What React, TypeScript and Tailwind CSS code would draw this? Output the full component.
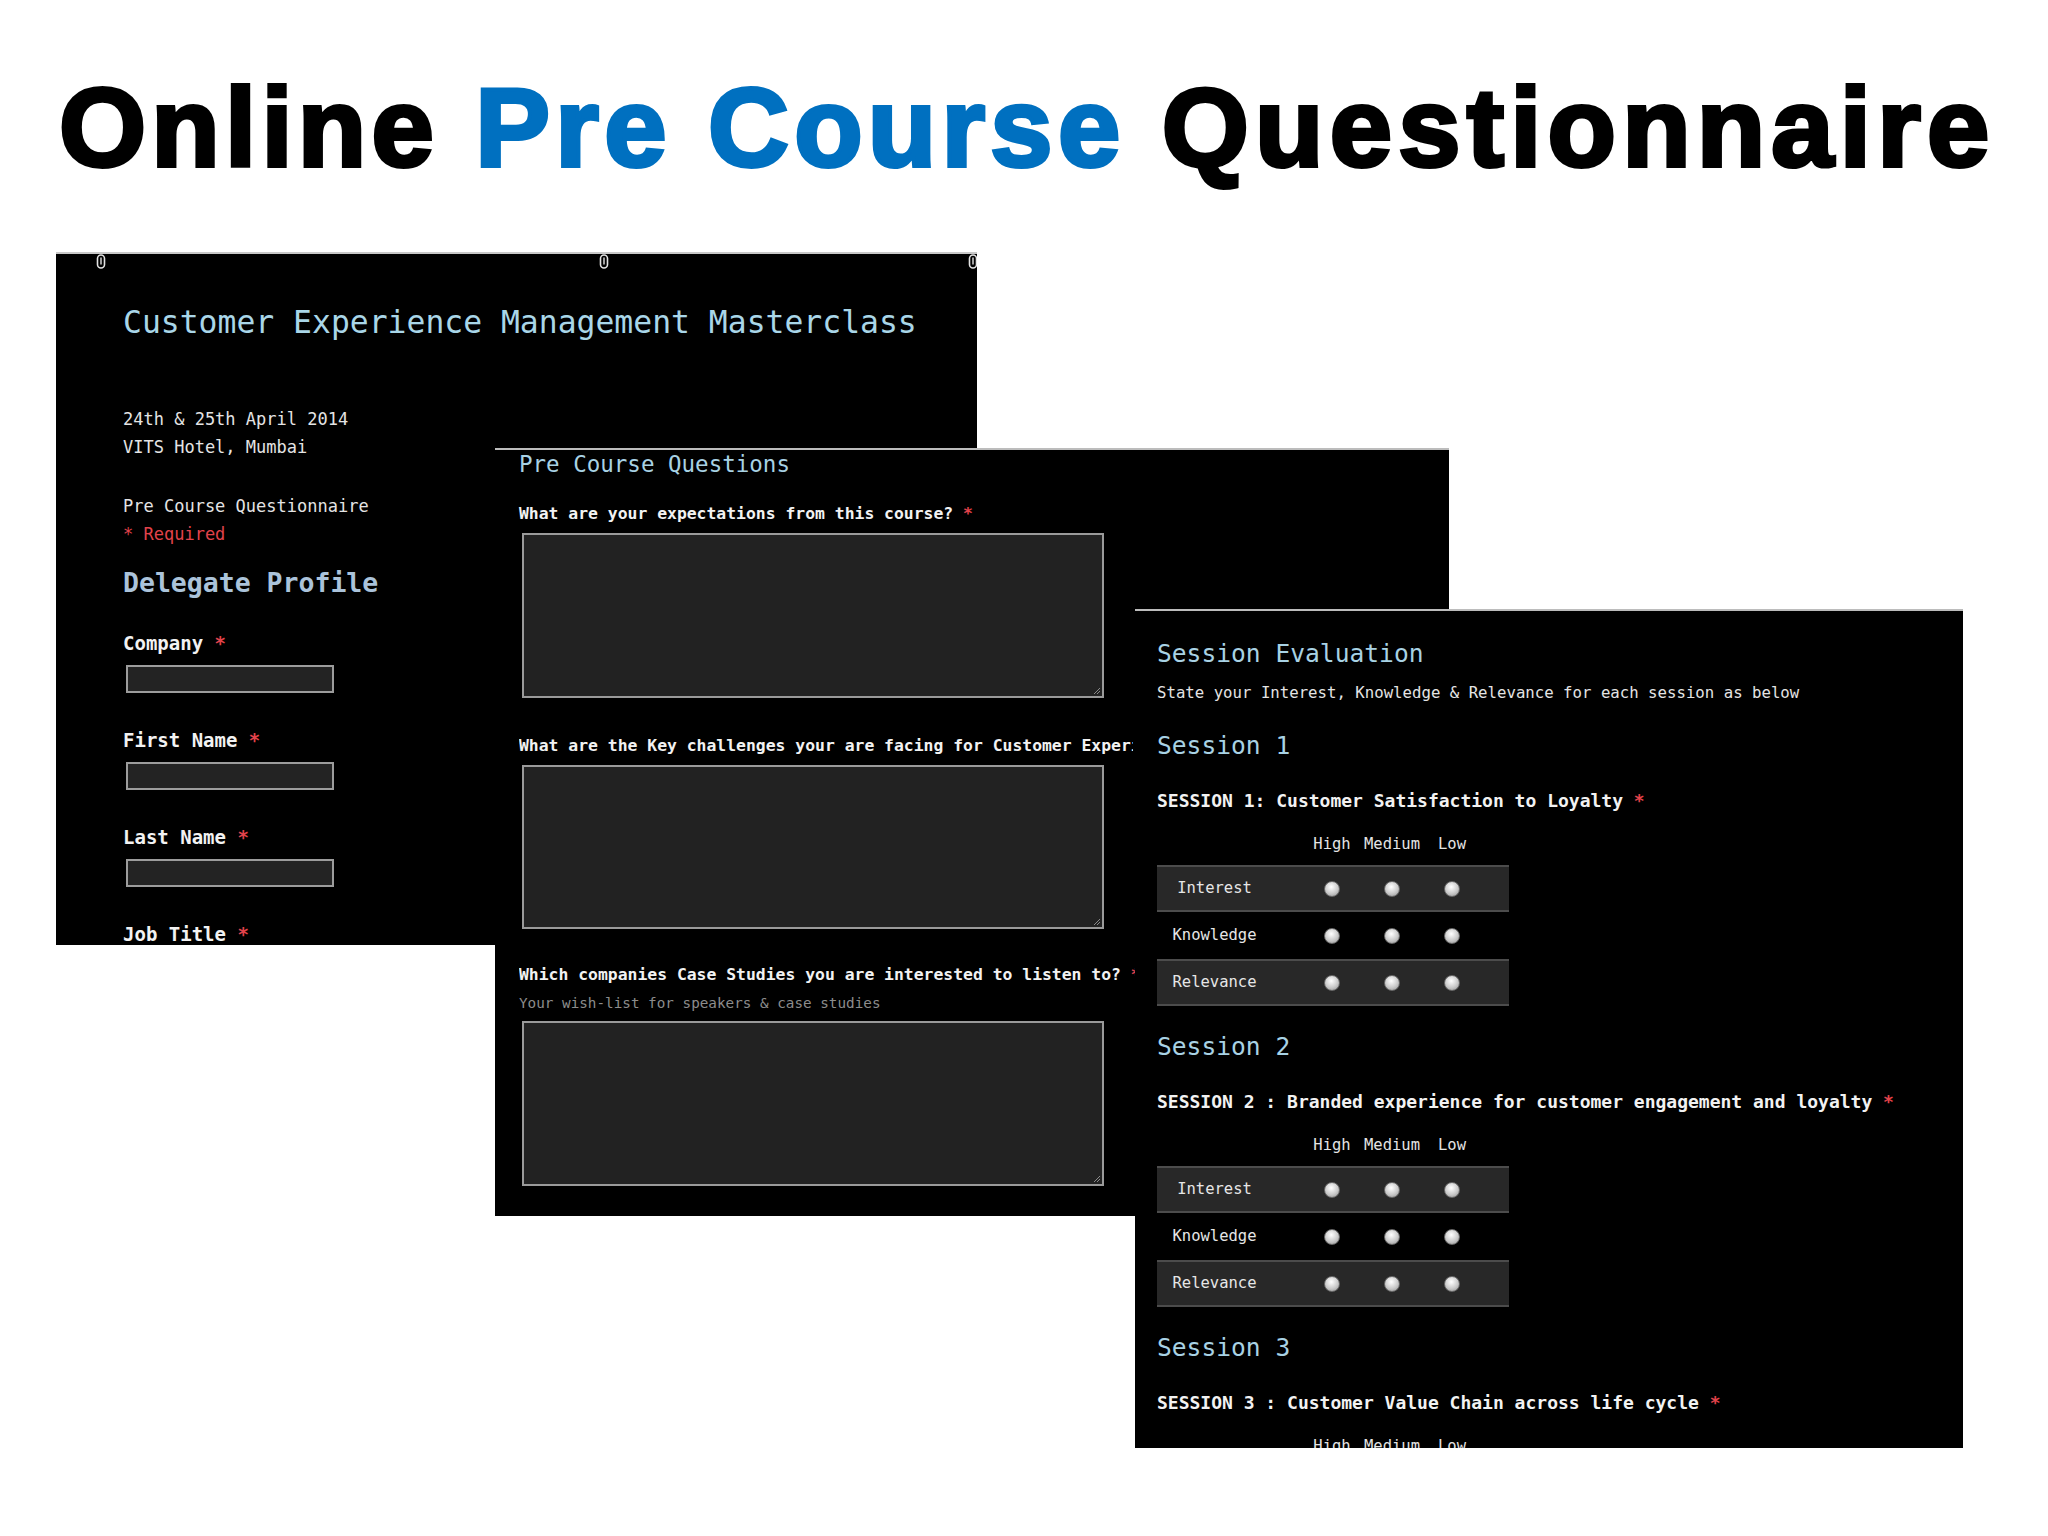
import React from 'react';

const sessions = [
  { n: 1, title: 'SESSION 1: Customer Satisfaction to Loyalty' },
  { n: 2, title: 'SESSION 2 : Branded experience for customer engagement and loyalty' },
  { n: 3, title: 'SESSION 3 : Customer Value Chain across life cycle' },
];

const rows = ['Interest', 'Knowledge', 'Relevance'];

function Req() {
  return <span className="text-[#e2434b]">*</span>;
}

function Clip() {
  return (
    <svg width="10" height="16" viewBox="0 0 10 16">
      <rect x="1.5" y="1" width="7" height="13" rx="3.5" fill="none" stroke="#e2e2e2" strokeWidth="1.6" />
      <path d="M5 3.5v7" stroke="#e2e2e2" strokeWidth="1.4" />
    </svg>
  );
}

function TextBox({ h }: { h: string }) {
  return (
    <div className={`relative mt-[8px] ml-[3px] w-[582px] ${h} bg-[#222222] border-2 border-[#9a9a9a]`}>
      <svg className="absolute right-[1px] bottom-[1px]" width="9" height="9" viewBox="0 0 9 9">
        <path d="M8 2L2 8M8 5L5 8" stroke="#8a8a8a" strokeWidth="1" />
      </svg>
    </div>
  );
}

function Field({ label, first }: { label: string; first?: boolean }) {
  return (
    <div className={first ? 'mt-[31px]' : 'mt-[35px]'}>
      <div className="w-fit text-[19px] leading-[24px] font-bold text-[#f2f2f2] whitespace-nowrap">
        {label} <Req />
      </div>
      <div className="mt-[10px] ml-[3px] w-[208px] h-[28px] bg-[#232323] border-2 border-[#9c9c9c]" />
    </div>
  );
}

function Radio() {
  return (
    <span className="block w-[16px] h-[16px] rounded-full border border-[#6a6a6a] bg-[radial-gradient(circle_at_45%_35%,#ffffff,#cacaca_55%,#8f8f8f)]" />
  );
}

function Grid() {
  return (
    <div className="mt-[11px] w-[352px]">
      {rows.map((r, i) => (
        <div
          key={r}
          className={
            i % 2 === 0
              ? 'flex items-center h-[47px] bg-[#282828] border-y-2 border-[#4c4c4c]'
              : 'flex items-center h-[47px] bg-black'
          }
        >
          <div className="w-[115px] text-center text-[15.5px] text-[#e6e6e6]">{r}</div>
          <div className="w-[30px]" />
          {[0, 1, 2].map(c => (
            <div key={c} className="w-[60px] flex justify-center">
              <Radio />
            </div>
          ))}
        </div>
      ))}
    </div>
  );
}

export default function App() {
  return (
    <div className="relative w-[2048px] h-[1536px] bg-white overflow-hidden">
      <h1 className="pt-[72px] pl-[59px] text-[112px] leading-[112px] font-bold tracking-[5.25px] whitespace-nowrap font-['Liberation_Sans',Arial,sans-serif] text-black [-webkit-text-stroke:4px_currentColor]">
        Online <span className="text-[#0070c0]">Pre Course</span> <span className="tracking-[6.2px]">Questionnaire</span>
      </h1>

      {/* event / delegate profile */}
      <div className="absolute left-[56px] top-[252px] w-[921px] h-[693px] bg-black border-t-2 border-[#c8c8c8] overflow-hidden pl-[67px] pt-[48px] font-['DejaVu_Sans_Mono',monospace]">
        <div className="absolute left-[40px] top-0"><Clip /></div>
        <div className="absolute left-[543px] top-0"><Clip /></div>
        <div className="absolute left-[912px] top-0"><Clip /></div>

        <div className="w-fit text-[31.4px] leading-[40px] text-[#a9d6e8] whitespace-nowrap">
          Customer Experience Management Masterclass
        </div>
        <div className="w-fit mt-[63px] text-[17px] leading-[28px] text-[#e4e4e4]">
          <div>24th &amp; 25th April 2014</div>
          <div>VITS Hotel, Mumbai</div>
        </div>
        <div className="w-fit mt-[31px] text-[17px] leading-[28px]">
          <div className="text-[#e4e4e4]">Pre Course Questionnaire</div>
          <div className="text-[#e2434b]">* Required</div>
        </div>
        <div className="w-fit mt-[18px] text-[26.5px] leading-[34px] font-bold text-[#abc3da]">Delegate Profile</div>
        <Field label="Company" first />
        <Field label="First Name" />
        <Field label="Last Name" />
        <Field label="Job Title" />
      </div>

      {/* pre course questions */}
      <div className="absolute left-[495px] top-[448px] w-[954px] h-[768px] bg-black border-t-2 border-[#bcbcbc] overflow-hidden pl-[24px] font-['DejaVu_Sans_Mono',monospace]">
        <div className="w-fit text-[22.5px] leading-[28px] text-[#a8d2e4]">Pre Course Questions</div>
        <div className="w-fit mt-[25px] text-[16.4px] leading-[22px] font-bold text-[#f2f2f2] whitespace-nowrap">
          What are your expectations from this course? <Req />
        </div>
        <TextBox h="h-[165px]" />
        <div className="mt-[37px] w-[614px] overflow-hidden text-[16.4px] leading-[22px] font-bold text-[#f2f2f2] whitespace-nowrap">
          What are the Key challenges your are facing for Customer Experience Management? <Req />
        </div>
        <TextBox h="h-[164px]" />
        <div className="mt-[35px] w-[616px] overflow-hidden text-[16.4px] leading-[22px] font-bold text-[#f2f2f2] whitespace-nowrap">
          Which companies Case Studies you are interested to listen to? <Req />
        </div>
        <div className="w-fit mt-[7px] text-[14.3px] leading-[20px] text-[#8c8c8c]">Your wish-list for speakers &amp; case studies</div>
        <TextBox h="h-[165px]" />
      </div>

      {/* session evaluation */}
      <div className="absolute left-[1135px] top-[609px] w-[828px] h-[839px] bg-black border-t-2 border-[#bcbcbc] overflow-hidden pl-[22px] pt-[28px] font-['DejaVu_Sans_Mono',monospace]">
        <div className="text-[24.6px] leading-[30px] text-[#a8d2e4]">Session Evaluation</div>
        <div className="mt-[14px] text-[15.7px] leading-[20px] text-[#e4e4e4] whitespace-nowrap">
          State your Interest, Knowledge &amp; Relevance for each session as below
        </div>
        {sessions.map((s, i) => (
          <div key={s.n} className={i === 0 ? 'mt-[28px]' : 'mt-[26px]'}>
            <div className="text-[24.6px] leading-[30px] text-[#a8d2e4]">Session {s.n}</div>
            <div className="mt-[28px] text-[18px] leading-[24px] font-bold text-[#f2f2f2] whitespace-nowrap">
              {s.title} <Req />
            </div>
            <div className="mt-[21px] flex pl-[145px] text-[15.5px] leading-[20px] text-[#e4e4e4]">
              <span className="w-[60px] text-center">High</span>
              <span className="w-[60px] text-center">Medium</span>
              <span className="w-[60px] text-center">Low</span>
            </div>
            <Grid />
          </div>
        ))}
      </div>
    </div>
  );
}
